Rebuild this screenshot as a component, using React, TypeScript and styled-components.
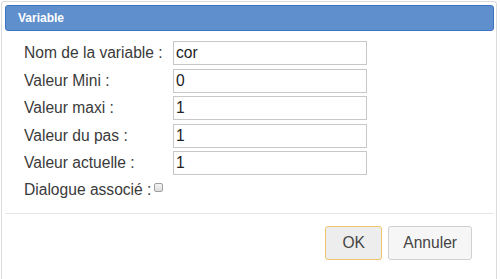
import React, { useState } from "react";
import styled, { createGlobalStyle } from "styled-components";

const fields = [
    { label: "Nom de la variable :", value: "cor" },
    { label: "Valeur Mini :", value: "0" },
    { label: "Valeur maxi :", value: "1" },
    { label: "Valeur du pas :", value: "1" },
    { label: "Valeur actuelle :", value: "1" },
];

const App: React.FC = () => {
    const [values, setValues] = useState(fields.map((f) => f.value));
    const [linked, setLinked] = useState(false);

    return (
        <>
            <GlobalStyle />
            <Dialog>
                <TitleBar>
                    <Title>Variable</Title>
                </TitleBar>
                <Content>
                    {fields.map((f, i) => (
                        <Row key={f.label}>
                            <Label>{f.label}</Label>
                            <TextInput
                                value={values[i]}
                                onChange={(e) => {
                                    const next = [...values];
                                    next[i] = e.target.value;
                                    setValues(next);
                                }}
                            />
                        </Row>
                    ))}
                    <CheckRow>
                        <span>Dialogue associé :</span>
                        <CheckBox checked={linked} onClick={() => setLinked(!linked)} />
                    </CheckRow>
                </Content>
                <ButtonPane>
                    <DialogButton $focused>OK</DialogButton>
                    <DialogButton>Annuler</DialogButton>
                </ButtonPane>
            </Dialog>
        </>
    );
};

export default App;

/* ~~~~~~ -- styling -- ~~~~~~ */

const GlobalStyle = createGlobalStyle`
    html, body {
        margin: 0;
        height: 279px;
        background: #fff;
        font-family: "Liberation Sans", Arial, sans-serif;
        overflow: hidden;
    }
`;

const Dialog = styled.div`
    margin: 1px 0 0 1px;
    width: 496px;
    height: 278px;
    box-sizing: border-box;
    border: 1px solid #dcdcdc;
    border-bottom: none;
    border-radius: 3px 3px 0 0;
    padding: 3px 2px 0 3px;
    background: #fff;
`;

const TitleBar = styled.div`
    height: 26px;
    box-sizing: border-box;
    border: 1px solid #3f74c4;
    border-radius: 3px;
    background: #5f8fcc;
    display: flex;
    align-items: center;
    padding: 0 12px;
`;

const Title = styled.span`
    color: #fff;
    font-weight: bold;
    font-size: 12px;
`;

const Content = styled.div`
    padding: 10px 0 0 19px;
    height: 181px;
    box-sizing: border-box;
    display: flex;
    flex-direction: column;
    gap: 3.5px;
`;

const Row = styled.div`
    display: flex;
    align-items: center;
    height: 24px;
`;

const Label = styled.span`
    width: 149px;
    font-size: 15.6px;
    color: #3a3a3a;
`;

const TextInput = styled.input`
    width: 194px;
    height: 24px;
    box-sizing: border-box;
    border: 1px solid #c8c8c8;
    padding: 0 2px;
    font-family: "Liberation Sans", Arial, sans-serif;
    font-size: 15.6px;
    color: #222;
    outline: none;
`;

const CheckRow = styled.div`
    display: flex;
    align-items: center;
    gap: 3px;
    font-size: 15.6px;
    color: #3a3a3a;
    height: 22px;
`;

const CheckBox = styled.span<{ checked: boolean }>`
    width: 9px;
    height: 9px;
    box-sizing: border-box;
    border: 1px solid #a0a0a0;
    border-radius: 2px;
    background: ${(p) => (p.checked ? "#6b8fc8" : "linear-gradient(#f4f4f4, #dcdcdc)")};
    margin-top: -4px;
    cursor: pointer;
`;

const ButtonPane = styled.div`
    border-top: 1px solid #e6e6e6;
    display: flex;
    justify-content: flex-end;
    gap: 6px;
    padding: 12px 22px 0 0;
    margin-top: 1px;
`;

const DialogButton = styled.button<{ $focused?: boolean }>`
    height: 34px;
    box-sizing: border-box;
    padding: 0 14px;
    font-family: "Liberation Sans", Arial, sans-serif;
    font-size: 15.6px;
    color: #454545;
    border-radius: 3px;
    border: 1px solid ${(p) => (p.$focused ? "#f0c36d" : "#d0d0d0")};
    background: ${(p) => (p.$focused ? "#ededed" : "#f6f6f6")};
    min-width: ${(p) => (p.$focused ? "57px" : "auto")};
`;
